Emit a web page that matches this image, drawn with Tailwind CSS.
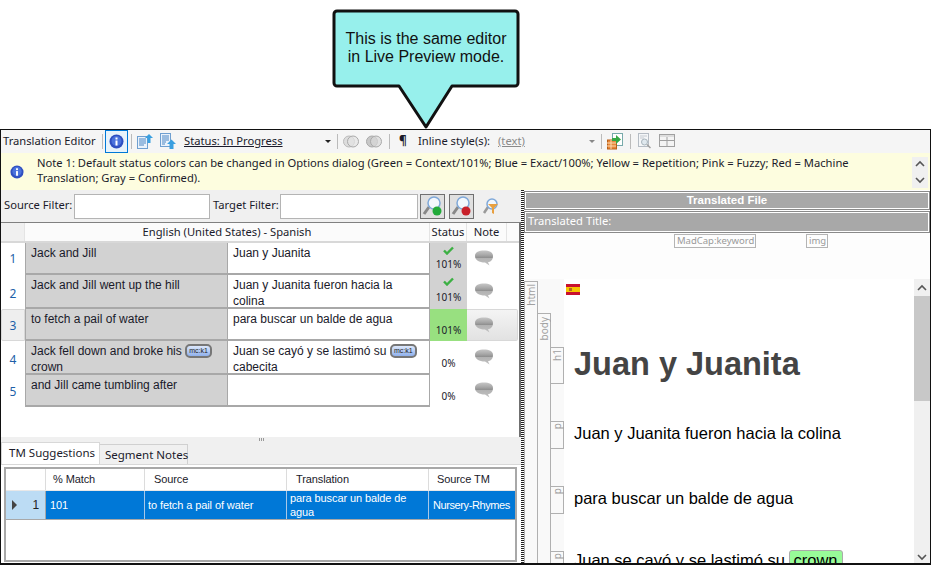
<!DOCTYPE html>
<html><head><meta charset="utf-8">
<script src="https://cdn.jsdelivr.net/npm/@tailwindcss/browser@4"></script>
</head>
<body class="w-[931px] h-[565px] overflow-hidden bg-white font-['Noto_Sans',sans-serif] text-[11.2px] text-[#1a1a2a]">
<!-- callout -->
<div class="relative h-[129px]">
  <svg class="absolute left-[330px] top-[6px]" width="192" height="124" viewBox="0 0 192 124">
    <path d="M7 5H185a3 3 0 0 1 3 3V77a3 3 0 0 1-3 3H122L96 121L69 80H7a3 3 0 0 1-3-3V8a3 3 0 0 1 3-3Z" fill="#97f0ec" stroke="#111" stroke-width="3" stroke-linejoin="round"/>
  </svg>
  <div class="absolute left-[334px] top-[30px] w-[184px] text-center font-['Liberation_Sans',sans-serif] text-[16px] leading-[18px] text-[#111]">This is the same editor<br>in Live Preview mode.</div>
</div>
<!-- window -->
<div class="h-[436px] border border-[#111] border-b-2 flex flex-col bg-[#f0f0f0]">
  <!-- toolbar -->
  <div class="h-[23px] flex items-center bg-[#f5f5f5] shrink-0 leading-[20px]">
    <span class="ml-[2px] w-[99px] whitespace-nowrap pb-[2px]">Translation Editor</span>
    <span class="w-px h-[15px] bg-[#bbb]"></span>
    <span class="ml-[2px] w-[23px] h-[23px] border border-[#0078d7] bg-[#e8f3fb] flex items-center justify-center">
      <svg width="15" height="15" viewBox="0 0 15 15"><circle cx="7.500" cy="7.500" r="7" fill="#2f4fc0"/><circle cx="7.500" cy="7" r="5" fill="#4a72dc"/><rect x="6.500" y="6.500" width="2" height="5" fill="#fff"/><rect x="6.500" y="3.500" width="2" height="2" fill="#fff"/></svg>
    </span>
    <span class="ml-[3px] w-px h-[15px] bg-[#bbb]"></span>
    <svg class="ml-[5px]" width="16" height="17" viewBox="0 0 16 17"><rect x="0.500" y="3.500" width="10" height="12" fill="#eaf2fb" stroke="#6f9fd0"/><path d="M2 6h7M2 8h7M2 10h7M2 12h5" stroke="#4b86c4"/><path d="M8 5l4-4 4 4h-2.500v5h-3V5Z" fill="#3a9fe0"/></svg>
    <svg class="ml-[7px]" width="17" height="17" viewBox="0 0 17 17"><rect x="0.500" y="0.500" width="10" height="13" fill="#eaf2fb" stroke="#6f9fd0"/><path d="M2 3h7M2 5h7M2 7h7M2 9h4M2 11h3" stroke="#4b86c4"/><path d="M7 11l4.500-4.500L16 11h-2.500v5h-4v-5Z" fill="#3a9fe0"/></svg>
    <span class="ml-[7px] w-[141px] underline whitespace-nowrap pb-[1px]">Status: In Progress</span>
    <span class="w-0 h-0 border-x-[3px] border-x-transparent border-t-[3px] border-t-[#222]"></span>
    <span class="ml-[6px] w-px h-[15px] bg-[#bbb]"></span>
    <svg class="ml-[5px]" width="16" height="13" viewBox="0 0 16 13"><circle cx="6" cy="6.500" r="5.500" fill="#ddd" stroke="#bbb"/><circle cx="10" cy="6.500" r="5.500" fill="#e4e4e4" fill-opacity="0.700" stroke="#aaa"/></svg>
    <svg class="ml-[7px]" width="16" height="13" viewBox="0 0 16 13"><circle cx="6" cy="6.500" r="5.500" fill="#c8c8c8" stroke="#aaa"/><circle cx="10" cy="6.500" r="5.500" fill="#d8d8d8" fill-opacity="0.700" stroke="#aaa"/></svg>
    <span class="ml-[7px] w-px h-[15px] bg-[#bbb]"></span>
    <span class="ml-[9px] w-[12px] font-bold text-[12px] pb-[2px]">¶</span>
    <span class="ml-[7px] w-[80px] whitespace-nowrap pb-[2px]">Inline style(s):</span>
    <span class="underline text-[#8a8a8a] w-[91px] pb-[1px]">(text)</span>
    <span class="w-0 h-0 border-x-[3px] border-x-transparent border-t-[3px] border-t-[#888]"></span>
    <span class="ml-[6px] w-px h-[15px] bg-[#bbb]"></span>
    <svg class="ml-[5px]" width="16" height="17" viewBox="0 0 16 17"><rect x="5.500" y="0.500" width="10" height="12" fill="#fff" stroke="#7aa"/><rect x="0.500" y="7" width="9" height="9" fill="#e8883a" stroke="#b85f18"/><path d="M0 10h9M0 13h9M4 7v9" stroke="#fbd9b0"/><path d="M5 5h4V2l5 4.500L9 11V8H5Z" fill="#35a845"/></svg>
    <span class="ml-[7px] w-px h-[15px] bg-[#bbb]"></span>
    <svg class="ml-[6px]" width="15" height="17" viewBox="0 0 15 17"><rect x="1.500" y="0.500" width="10" height="13" fill="#f4f6f8" stroke="#b5bcc4"/><path d="M3 3h7M3 5h4" stroke="#c5cad0"/><circle cx="7.500" cy="9" r="3" fill="#dfe8ee" stroke="#a8b4bc"/><path d="M10 11.500l3.500 3.500" stroke="#a0a0a0" stroke-width="1.500"/></svg>
    <svg class="ml-[7px] mb-[2px]" width="16" height="13" viewBox="0 0 16 13"><rect x="0.500" y="0.500" width="15" height="12" fill="#f4f4f4" stroke="#a0a0a0"/><path d="M0 6.500h16M8 0v13" stroke="#a0a0a0"/><path d="M1 1h14v2H1Z" fill="#ddd"/></svg>
  </div>
  <!-- note -->
  <div class="h-[37px] bg-[#fdfddf] flex shrink-0">
    <div class="w-[36px] flex items-center justify-center pr-[4px]"><svg width="14" height="14" viewBox="0 0 15 15"><circle cx="7.500" cy="7.500" r="7" fill="#2f4fc0"/><circle cx="7.500" cy="7" r="5" fill="#4a72dc"/><rect x="6.500" y="6.500" width="2" height="5" fill="#fff"/><rect x="6.500" y="3.500" width="2" height="2" fill="#fff"/></svg></div>
    <p class="w-[870px] pt-[2px] leading-[15px]">Note 1: Default status colors can be changed in Options dialog (Green = Context/101%; Blue = Exact/100%; Yellow = Repetition; Pink = Fuzzy; Red = Machine Translation; Gray = Confirmed).</p>
    <div class="ml-auto mr-[2px] mt-[4px] w-[16px] h-[31px] bg-[#f0f0f0] flex flex-col items-center">
      <svg class="mt-[3px]" width="10" height="8" viewBox="0 0 10 8"><path d="M1 6l4-4 4 4" fill="none" stroke="#555" stroke-width="1.600"/></svg>
      <svg class="mt-[8px]" width="10" height="8" viewBox="0 0 10 8"><path d="M1 2l4 4 4-4" fill="none" stroke="#555" stroke-width="1.600"/></svg>
    </div>
  </div>
  <!-- panes -->
  <div class="flex-1 flex min-h-0">
    <!-- left -->
    <div class="w-[520px] flex flex-col shrink-0 bg-[#f0f0f0]">
      <div class="h-[32px] flex items-center shrink-0">
        <span class="ml-[3px] w-[70px] whitespace-nowrap pb-[2px]">Source Filter:</span>
        <span class="w-[136px] h-[25px] bg-white border border-[#b4b4b4]"></span>
        <span class="ml-[3px] w-[67px] whitespace-nowrap pb-[2px]">Target Filter:</span>
        <span class="w-[138px] h-[25px] bg-white border border-[#b4b4b4]"></span>
        <span class="ml-[2px] w-[25px] h-[25px] bg-[#e0e0e0] border border-[#707070] flex items-center justify-center">
          <svg width="21" height="21" viewBox="0 0 21 21"><path d="M7 11L2 18" stroke="#888" stroke-width="3"/><circle cx="12" cy="7" r="6" fill="#f2f7fc" stroke="#7fa8d8" stroke-width="1.500"/><circle cx="15" cy="15" r="4.500" fill="#22aa3a"/></svg>
        </span>
        <span class="ml-[4px] w-[25px] h-[25px] bg-[#e0e0e0] border border-[#707070] flex items-center justify-center">
          <svg width="21" height="21" viewBox="0 0 21 21"><path d="M7 11L2 18" stroke="#888" stroke-width="3"/><circle cx="12" cy="7" r="6" fill="#f2f7fc" stroke="#7fa8d8" stroke-width="1.500"/><circle cx="15" cy="15" r="4.500" fill="#c8202a"/></svg>
        </span>
        <svg class="ml-[8px]" width="18" height="19" viewBox="0 0 18 19"><path d="M6 10L2 16" stroke="#999" stroke-width="2.500"/><circle cx="10" cy="7" r="5" fill="#f2f7fc" stroke="#7fa8d8" stroke-width="1.500"/><path d="M6 7h10l-4 4v6l-2-1v-5Z" fill="#e8a040"/></svg>
      </div>
      <!-- grid -->
      <div class="h-[215px] shrink-0 border-t border-[#808080] bg-white flex flex-col border-r-2 border-r-[#707070]">
        <div class="h-[20px] shrink-0 flex bg-[#fbfbfb] border-b-2 border-[#d8d8d8]">
          <span class="w-[24px] bg-[#f0f0f0] border-r border-[#e4e4e4]"></span>
          <span class="w-[405px] text-center leading-[18px] border-r border-[#e4e4e4]">English (United States) - Spanish</span>
          <span class="w-[37px] text-center leading-[18px] border-r border-[#e4e4e4]">Status</span>
          <span class="w-[40px] text-center leading-[18px] border-r border-[#e4e4e4]">Note</span>
        </div>
        <div class="flex h-[32px] items-stretch">
          <span class="w-[24px] shrink-0 flex items-center justify-center text-[#1d5fa8] text-[12px]">1</span>
          <div class="w-[203px] shrink-0 bg-[#d2d2d2] border border-[#a8a8a8] border-t-0 border-b-2 px-[5px] font-['Liberation_Sans',sans-serif] text-[12px] leading-[16px] pt-[2px]">Jack and Jill</div>
          <div class="w-[202px] shrink-0 bg-white border-y-0 border-b-2 border-r border-[#a8a8a8] px-[5px] font-['Liberation_Sans',sans-serif] text-[12px] leading-[16px] pt-[2px]">Juan y Juanita</div>
          <div class="w-[37px] shrink-0 bg-[#d2d2d2] flex flex-col items-center text-[10px]"><svg class="mt-[3px]" width="11" height="9" viewBox="0 0 11 9"><path d="M1 4.500L4 7.500L10 1.500" fill="none" stroke="#3cb043" stroke-width="2.400"/></svg><span class="mt-[2px] leading-[14px]">101%</span></div>
          <div class="w-[40px] pl-[8px] pt-[7px]"><svg width="18" height="16" viewBox="0 0 18 16"><defs><linearGradient id="bub" x1="0" y1="0" x2="0" y2="1"><stop offset="0" stop-color="#c6c6c6"/><stop offset="0.300" stop-color="#a8a8a8"/><stop offset="0.480" stop-color="#909090"/><stop offset="0.520" stop-color="#b2b2b2"/><stop offset="1" stop-color="#c2c2c2"/></linearGradient></defs><path d="M9 .5C14 .5 18 2 18 6C18 10 15.500 12 13 12.300L14.500 15.500L10 12.500C4 12.500 0 10 0 6C0 2 4 .5 9 .5Z" fill="url(#bub)"/></svg></div>
        </div>
        <div class="flex h-[34px] items-stretch">
          <span class="w-[24px] shrink-0 flex items-center justify-center text-[#1d5fa8] text-[12px] pt-[3px]">2</span>
          <div class="w-[203px] shrink-0 bg-[#d2d2d2] border border-[#a8a8a8] border-t-0 border-b-2 px-[5px] font-['Liberation_Sans',sans-serif] text-[12px] leading-[16px] pt-[2px]">Jack and Jill went up the hill</div>
          <div class="w-[202px] shrink-0 bg-white border-b-2 border-r border-[#a8a8a8] px-[5px] font-['Liberation_Sans',sans-serif] text-[12px] leading-[16px] pt-[2px]">Juan y Juanita fueron hacia la colina</div>
          <div class="w-[37px] shrink-0 bg-[#d2d2d2] flex flex-col items-center text-[10px]"><svg class="mt-[2px]" width="11" height="9" viewBox="0 0 11 9"><path d="M1 4.500L4 7.500L10 1.500" fill="none" stroke="#3cb043" stroke-width="2.400"/></svg><span class="mt-[4px] leading-[14px]">101%</span></div>
          <div class="w-[40px] pl-[8px] pt-[8px]"><svg width="18" height="16" viewBox="0 0 18 16"><path d="M9 .5C14 .5 18 2 18 6C18 10 15.500 12 13 12.300L14.500 15.500L10 12.500C4 12.500 0 10 0 6C0 2 4 .5 9 .5Z" fill="url(#bub)"/></svg></div>
        </div>
        <div class="flex h-[32px] items-stretch">
          <span class="w-[24px] shrink-0 flex items-center justify-center text-[#1d5fa8] text-[12px] bg-[#eeeeee] border border-[#d8d8d8] rounded-l-[2px] pt-[2px]">3</span>
          <div class="w-[203px] shrink-0 bg-[#d2d2d2] border border-[#a8a8a8] border-t-0 border-b-2 px-[5px] font-['Liberation_Sans',sans-serif] text-[12px] leading-[16px] pt-[2px]">to fetch a pail of water</div>
          <div class="w-[202px] shrink-0 bg-white border-b-2 border-r border-[#a8a8a8] px-[5px] font-['Liberation_Sans',sans-serif] text-[12px] leading-[16px] pt-[2px]">para buscar un balde de agua</div>
          <div class="w-[37px] shrink-0 bg-[#98e080] flex flex-col items-center justify-end text-[10px]"><span class="mb-[4px] leading-[14px]">101%</span></div>
          <div class="w-[51px] pl-[8px] pt-[7px] bg-gradient-to-b from-[#f4f4f4] to-[#e2e2e2] border border-[#d8d8d8] border-l-0 rounded-r-[2px]"><svg class="block" width="18" height="16" viewBox="0 0 18 16"><path d="M9 .5C14 .5 18 2 18 6C18 10 15.500 12 13 12.300L14.500 15.500L10 12.500C4 12.500 0 10 0 6C0 2 4 .5 9 .5Z" fill="url(#bub)"/></svg></div>
        </div>
        <div class="flex h-[34px] items-stretch">
          <span class="w-[24px] shrink-0 flex items-center justify-center text-[#1d5fa8] text-[12px] pt-[3px]">4</span>
          <div class="w-[203px] shrink-0 bg-[#d2d2d2] border border-[#a8a8a8] border-t-0 border-b-2 px-[5px] font-['Liberation_Sans',sans-serif] text-[12px] leading-[16px] pt-[2px]">Jack fell down and broke his <span class="inline-block align-top mt-[1px] w-[27px] h-[14px] rounded-[5px] border-2 border-[#777] bg-gradient-to-b from-[#dde8fb] to-[#8fb0ec] text-[7px] leading-[10px] text-center text-[#222]">mc:k1</span> crown</div>
          <div class="w-[202px] shrink-0 bg-white border-b-2 border-r border-[#a8a8a8] px-[5px] font-['Liberation_Sans',sans-serif] text-[12px] leading-[16px] pt-[2px]">Juan se cayó y se lastimó su <span class="inline-block align-top mt-[1px] w-[27px] h-[14px] rounded-[5px] border-2 border-[#777] bg-gradient-to-b from-[#dde8fb] to-[#8fb0ec] text-[7px] leading-[10px] text-center text-[#222]">mc:k1</span> cabecita</div>
          <div class="w-[37px] shrink-0 flex items-end justify-center text-[10px]"><span class="mb-[5px] leading-[14px]">0%</span></div>
          <div class="w-[40px] pl-[8px] pt-[8px]"><svg width="18" height="16" viewBox="0 0 18 16"><path d="M9 .5C14 .5 18 2 18 6C18 10 15.500 12 13 12.300L14.500 15.500L10 12.500C4 12.500 0 10 0 6C0 2 4 .5 9 .5Z" fill="url(#bub)"/></svg></div>
        </div>
        <div class="flex h-[32px] items-stretch">
          <span class="w-[24px] shrink-0 flex items-center justify-center text-[#1d5fa8] text-[12px] pt-[1px]">5</span>
          <div class="w-[203px] shrink-0 bg-[#d2d2d2] border border-[#a8a8a8] border-t-0 border-b-2 px-[5px] font-['Liberation_Sans',sans-serif] text-[12px] leading-[16px] pt-[2px]">and Jill came tumbling after</div>
          <div class="w-[202px] shrink-0 bg-white border-b-2 border-r border-[#a8a8a8]"></div>
          <div class="w-[37px] shrink-0 flex items-end justify-center text-[10px]"><span class="mb-[4px] leading-[14px]">0%</span></div>
          <div class="w-[40px] pl-[8px] pt-[7px]"><svg width="18" height="16" viewBox="0 0 18 16"><path d="M9 .5C14 .5 18 2 18 6C18 10 15.500 12 13 12.300L14.500 15.500L10 12.500C4 12.500 0 10 0 6C0 2 4 .5 9 .5Z" fill="url(#bub)"/></svg></div>
        </div>
      </div>
      <!-- splitter -->
      <div class="h-[5px] shrink-0 flex justify-center items-center gap-px pl-[1px]"><i class="w-px h-[3px] bg-[#999]"></i><i class="w-px h-[3px] bg-[#999]"></i><i class="w-px h-[3px] bg-[#999]"></i></div>
      <!-- tabs -->
      <div class="h-[22px] shrink-0 flex items-end">
        <span class="w-[99px] h-[22px] bg-white border border-b-0 border-[#d8d8d8] pl-[7px] leading-[20px] text-[11.5px] whitespace-nowrap">TM Suggestions</span>
        <span class="w-[88px] h-[20px] bg-[#f0f0f0] border border-b-0 border-l-0 border-[#d0d0d0] pl-[5px] leading-[19px] text-[11.5px] whitespace-nowrap">Segment Notes</span>
      </div>
      <div class="flex-1 min-h-0 bg-white border-t border-[#d8d8d8] px-[3px] pt-[2px] pb-[1px]">
        <div class="h-[95px] border-2 border-[#a8a8a8] bg-white font-['Liberation_Sans',sans-serif] text-[11px] tracking-[-0.1px] mr-[1px] flex flex-col">
          <div class="h-[22px] shrink-0 flex leading-[20px] border-b border-[#e8e8e8]">
            <span class="w-[40px] border-r border-[#dcdcdc]"></span>
            <span class="w-[99px] pl-[7px] border-r border-[#dcdcdc]">% Match</span>
            <span class="w-[142px] pl-[9px] border-r border-[#dcdcdc]">Source</span>
            <span class="w-[142px] pl-[9px] border-r border-[#dcdcdc]">Translation</span>
            <span class="w-[86px] pl-[8px]">Source TM</span>
          </div>
          <div class="h-[29px] shrink-0 flex bg-[#0078d7] text-white border-b border-[#a8a8a8] items-center">
            <span class="w-[40px] h-full bg-[#bcdcf4] text-[#222] border-r border-[#a8a8a8] flex items-center justify-between pl-[6px] pr-[6px]"><span class="w-0 h-0 border-y-[5px] border-y-transparent border-l-[5px] border-l-[#444]"></span><span class="text-[12px]">1</span></span>
            <span class="w-[99px] h-full flex items-center pl-[4px] border-r border-[#a8c8e8]">101</span>
            <span class="w-[142px] h-full flex items-center pl-[3px] border-r border-[#a8c8e8] whitespace-nowrap">to fetch a pail of water</span>
            <span class="w-[142px] h-full flex items-center pl-[3px] border-r border-[#a8c8e8] leading-[14px]">para buscar un balde de agua</span>
            <span class="w-[86px] pl-[4px] whitespace-nowrap tracking-[-0.4px]">Nursery-Rhymes</span>
          </div>
        </div>
      </div>
    </div>
    <!-- vertical splitter -->
    <div class="w-[3px] shrink-0 bg-[repeating-linear-gradient(0deg,#222_0,#222_1px,#fff_1px,#fff_2px)]"></div>
    <!-- right -->
    <div class="flex-1 min-w-0 bg-[#fdfdfd] flex flex-col overflow-hidden">
      <div class="h-[19px] shrink-0 mt-[1px] border border-[#8a8a8a] outline outline-white -outline-offset-2 bg-[#a8a8a8] text-white font-bold text-center leading-[16px] font-['Liberation_Sans',sans-serif] text-[11.5px]">Translated File</div>
      <div class="h-[22px] shrink-0 mt-[1px] border border-[#8a8a8a] outline outline-white -outline-offset-2 bg-[#a8a8a8] text-white leading-[18px] pl-[3px]">Translated Title:</div>
      <div class="h-[14px] mt-[1px] shrink-0 flex text-[#9a9a9a] text-[9.5px] leading-[11px]">
        <span class="ml-[150px] w-[82px] border border-[#b4b4b4] pl-[2px] whitespace-nowrap">MadCap:keyword</span>
        <span class="ml-[50px] w-[22px] border border-[#b4b4b4] pl-[2px]">img</span>
      </div>
      <div class="mt-[31px] flex-1 min-h-0 flex overflow-hidden bg-[#f9f9f9]">
        <div class="w-[14px] h-[300px] mt-[2px] shrink-0 border border-b-0 border-[#b0b0b0] text-[#a0a0a0] text-[10px] flex justify-center items-start pt-[2px]"><span class="[writing-mode:vertical-rl] rotate-180 leading-[12px]">html</span></div>
        <div class="w-[14px] h-[300px] mt-[34px] -ml-[1px] shrink-0 border border-b-0 border-[#b0b0b0] text-[#a0a0a0] text-[10px] flex justify-center items-start pt-[3px]"><span class="[writing-mode:vertical-rl] rotate-180 leading-[12px]">body</span></div>
        <div class="w-[14px] shrink-0 -ml-[1px] flex flex-col pt-[68px] text-[#a0a0a0] text-[10px]">
          <div class="h-[37px] shrink-0 border border-[#b0b0b0] flex justify-center items-start pt-[1px]"><span class="[writing-mode:vertical-rl] rotate-180 leading-[12px]">h1</span></div>
          <div class="h-[28px] shrink-0 mt-[37px] border border-[#b0b0b0] flex justify-center items-start pt-[1px]"><span class="[writing-mode:vertical-rl] rotate-180 leading-[12px]">p</span></div>
          <div class="h-[28px] shrink-0 mt-[37px] border border-[#b0b0b0] flex justify-center items-start pt-[1px]"><span class="[writing-mode:vertical-rl] rotate-180 leading-[12px]">p</span></div>
          <div class="h-[28px] shrink-0 mt-[37px] border border-[#b0b0b0] flex justify-center items-start pt-[1px]"><span class="[writing-mode:vertical-rl] rotate-180 leading-[12px]">p</span></div>
        </div>
        <div class="flex-1 min-w-0 bg-white font-['Liberation_Sans',sans-serif] text-black text-[16.5px]">
          <svg class="ml-[2px] mt-[5px]" width="14" height="11" viewBox="0 0 14 11"><rect width="14" height="11" fill="#c8102e"/><rect y="3" width="14" height="5" fill="#f5c400"/><rect x="3" y="4" width="3" height="3" fill="#b5651d"/></svg>
          <h1 class="ml-[10px] mt-[51px] text-[32.500px] leading-[36px] font-bold text-[#444] whitespace-nowrap">Juan y Juanita</h1>
          <p class="ml-[10px] mt-[42px] leading-[18px] whitespace-nowrap">Juan y Juanita fueron hacia la colina</p>
          <p class="ml-[10px] mt-[47px] leading-[18px] whitespace-nowrap">para buscar un balde de agua</p>
          <p class="ml-[10px] mt-[43px] leading-[18px] whitespace-nowrap">Juan se cayó y se lastimó su <span class="inline-block px-[4px] -ml-[1px] bg-[#98fb98] border border-[#aaa] rounded-t-[3px]">crown</span></p>
        </div>
        <div class="w-[16px] shrink-0 bg-[#f0f0f0] flex flex-col items-center">
          <svg class="mt-[5px] shrink-0" width="10" height="8" viewBox="0 0 10 8"><path d="M1 6l4-4 4 4" fill="none" stroke="#555" stroke-width="1.600"/></svg>
          <span class="mt-[4px] w-full h-[105px] shrink-0 bg-[#c8c8c8]"></span>
          <svg class="mt-auto mb-[2px] shrink-0" width="10" height="8" viewBox="0 0 10 8"><path d="M1 2l4 4 4-4" fill="none" stroke="#555" stroke-width="1.600"/></svg>
        </div>
      </div>
    </div>
  </div>
</div>
</body></html>
